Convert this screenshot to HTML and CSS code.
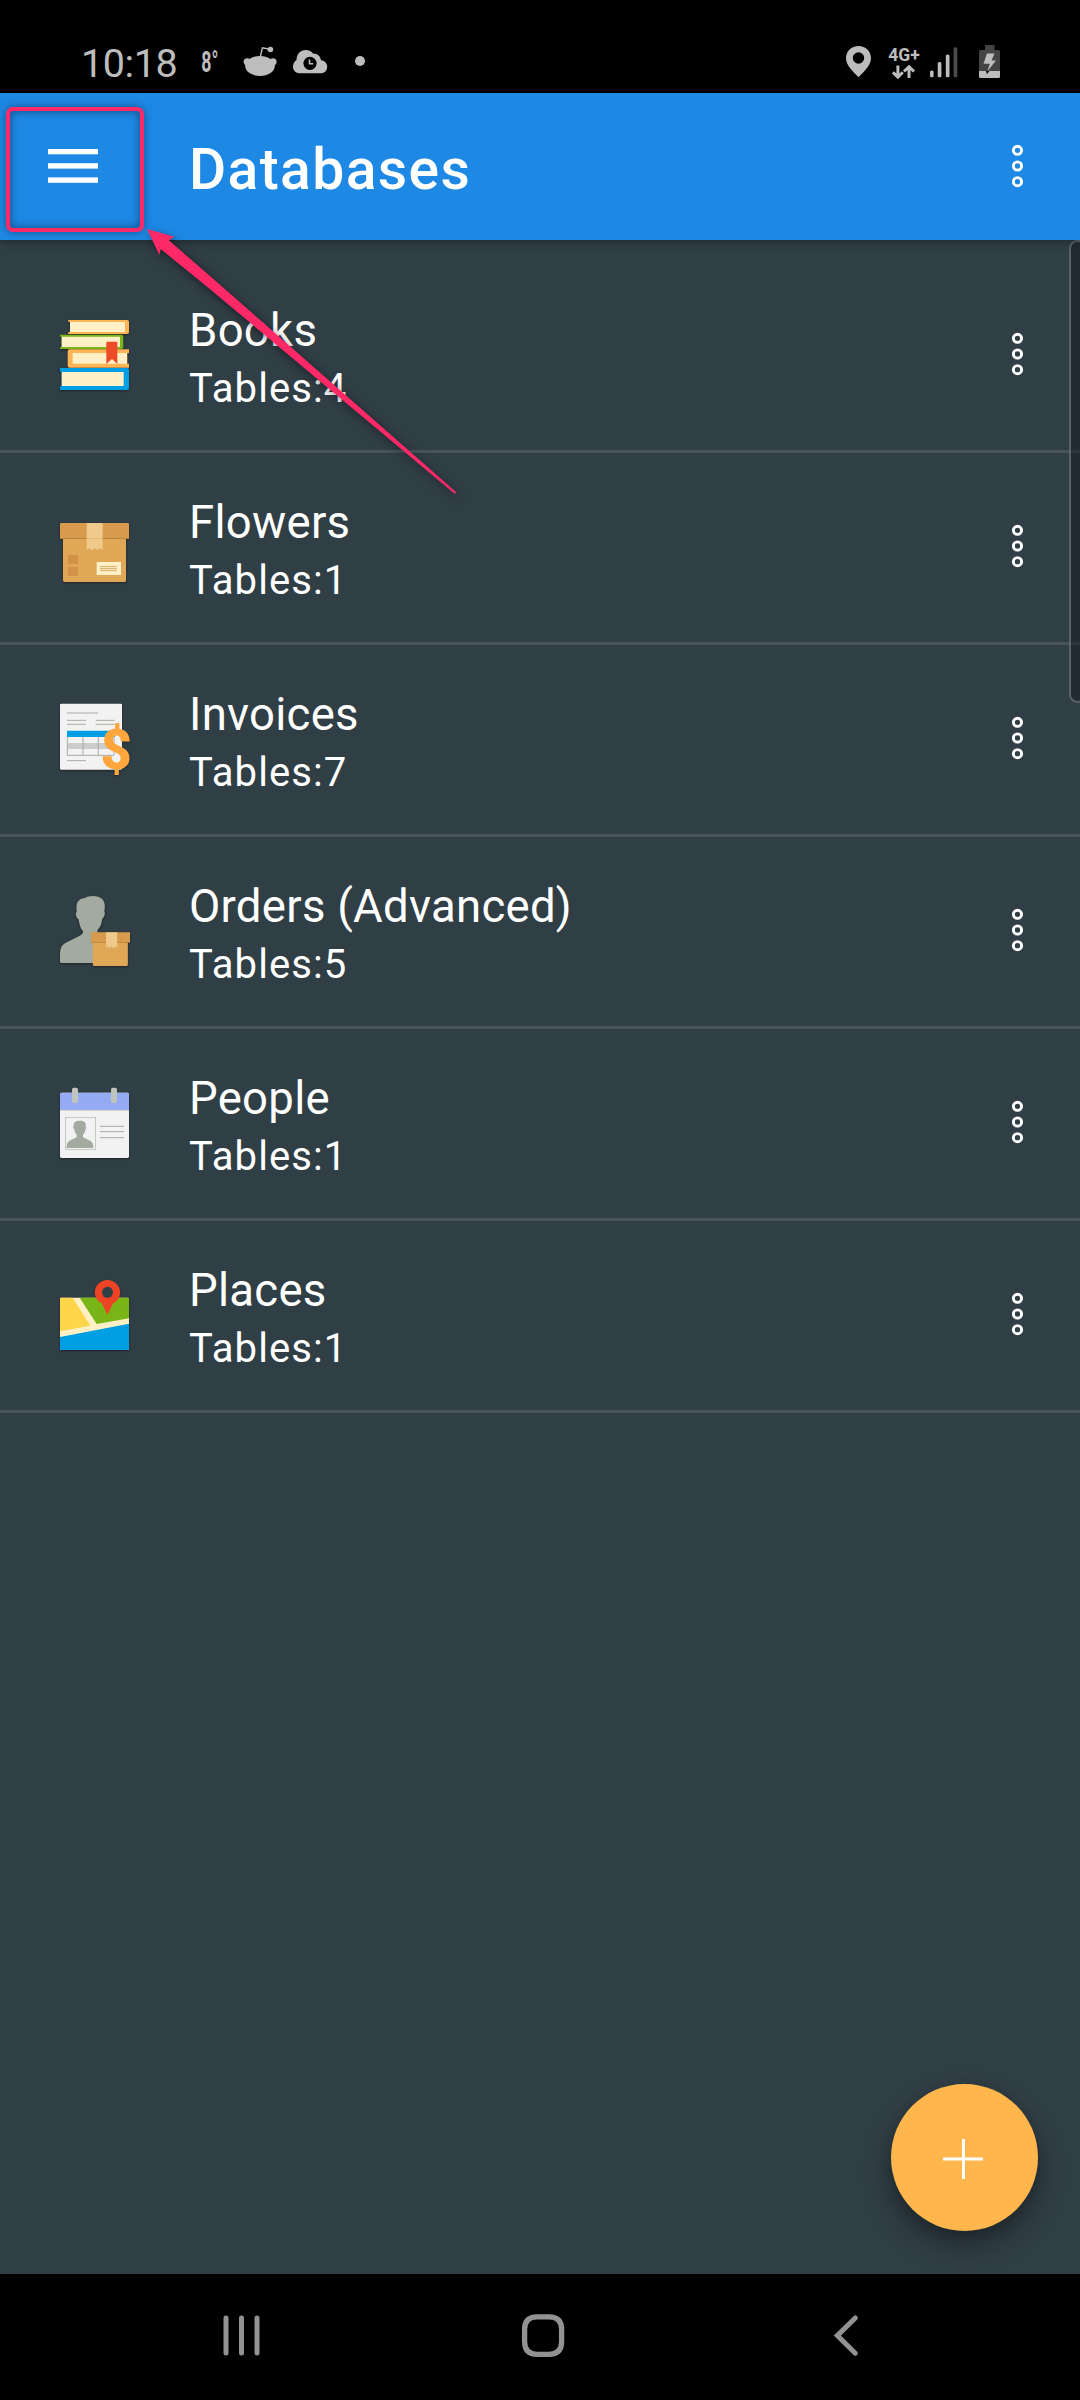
FILE: index.html
```html
<!DOCTYPE html>
<html lang="en">
<head>
<meta charset="utf-8">
<title>Databases</title>
<link rel="stylesheet" href="styles.css">
</head>
<body>
<svg class="defs" aria-hidden="true">
  <symbol id="more" viewBox="0 0 12 44">
    <g fill="none" stroke="#fff" stroke-width="2.9"><circle cx="5.500" cy="6.300" r="4.100"/><circle cx="5.500" cy="22" r="4.100"/><circle cx="5.500" cy="37.700" r="4.100"/></g>
  </symbol>
</svg>
<div class="screen">
  <div class="status">
    <div class="status-left">
      <span class="clock">10:18</span>
      <svg class="temp" width="22" height="32" viewBox="200 45 22 32" fill="#bdbdbd"><text class="temp-text" transform="translate(201.3 71.8) scale(.6 1)">8°</text></svg>
      <svg class="reddit" width="34" height="30" viewBox="243 46 34 30" fill="#bdbdbd"><ellipse cx="260" cy="66" rx="14.8" ry="10"/><circle cx="247.2" cy="61.8" r="3.6"/><circle cx="273" cy="61.8" r="3.6"/><circle cx="270.4" cy="49.5" r="2.8"/><path d="M260.3 57 L262.4 47.8 L270 49.3" fill="none" stroke="#bdbdbd" stroke-width="1.4"/></svg>
      <svg class="cloud" width="35" height="24" viewBox="293 50 35 24"><path d="M299.5 73.3c-4 0-6.5-3-6.5-6.5 0-3.200 1.500-5.300 3.500-6.700 0-6 4-10.100 9.200-10.100 3.300 0 5.800 1.500 7.300 3.500 5 0 7.500 3.200 8 6.800 4 .5 6.200 3.200 6.200 6.500 0 3.800-2.600 6.500-6.500 6.500z" fill="#bdbdbd"/><circle cx="310" cy="63.300" r="6.600" fill="#000"/><path d="M309.500 59.500v4.300h3.700" fill="none" stroke="#bdbdbd" stroke-width="1.600"/></svg>
      <span class="dot"></span>
    </div>
    <div class="status-right">
      <svg width="26" height="32" viewBox="846 46 26 32"><path fill="#bdbdbd" fill-rule="evenodd" d="M858.500 46c7.200 0 12.500 5.300 12.500 12.300 0 6.500-6 12.500-12.500 19-6.500-6.500-12.500-12.500-12.500-19 0-7 5.300-12.300 12.500-12.300zm0 6.300a5.700 5.700 0 1 0 0 11.400 5.700 5.700 0 0 0 0-11.400z"/></svg>
      <div class="network">
        <span class="network-type">4G+</span>
        <svg width="24" height="15" viewBox="892 65 24 15" fill="none" stroke="#bdbdbd" stroke-width="3"><path d="M897.900 65.500V77M893 72.300l4.900 4.800 4.900-4.800M909 78V66.500M904 71.500l5-4.800 5 4.800"/></svg>
      </div>
      <svg class="signal" width="28" height="31" viewBox="930 47 28 31" fill="#bdbdbd"><rect x="930" y="70.500" width="3.600" height="6.700" rx="1.500"/><rect x="937.700" y="62" width="3.700" height="15.200" rx="1.500"/><rect x="945.800" y="54.500" width="3.700" height="22.700" rx="1.500"/><rect x="953.600" y="47.300" width="3.700" height="30" rx="1.500" fill="#4b4b4b"/></svg>
      <svg class="battery" width="22" height="34" viewBox="979 45 22 34"><path fill="#444" d="M985 45h9.500v5h-9.500zM980.500 50h18q1.500 0 1.500 1.500V71h-21V51.500q0-1.500 1.500-1.500z"/><path fill="#bdbdbd" d="M979 71h21v5.500q0 1.500-1.500 1.500h-18q-1.500 0-1.500-1.500z"/><path fill="#bdbdbd" d="M987 53.500h7.500l-3 7h4.500l-8.700 11 2.500-7.700h-6.300z"/><path fill="#000" d="M986 71h3.300l-2.300 3.200z"/></svg>
    </div>
  </div>

  <header class="appbar">
    <svg class="menu" width="50" height="36" viewBox="0 0 50 36" fill="#fff"><rect width="50" height="5.300"/><rect y="14.200" width="50" height="5.400"/><rect y="28.400" width="50" height="5.400"/></svg>
    <h1 class="title">Databases</h1>
    <svg class="more" width="12" height="44"><use href="#more"/></svg>
  </header>

  <main class="content">
    <ul class="list">
      <li class="row">
        <svg class="icon" viewBox="48 78 228 228">
          <path fill="#ffb455" d="M85 90h176q6 0 6 6v30q0 6-6 6H85v-6h5V96h-5z"/><path fill="#fff0c5" d="M90 96h165v30H90z"/>
          <path fill="#79b516" d="M60 134h184q6 0 6 6v31q0 6-6 6H60v-6h5v-31h-5z"/><path fill="#fff0c5" d="M65 140h175v31H65z"/>
          <path fill="#ffb455" d="M267 178H89q-6 0-6 6v43q0 6 6 6h178v-12h-5v-31h5z"/><path fill="#fff0c5" d="M98 189h163v32H98z"/>
          <path fill="#009fe3" d="M60 234h201q6 0 6 6v54q0 6-6 6H60v-11h5v-44h-5z"/><path fill="#fff0c5" d="M65 246h186v42H65z"/>
          <path fill="#ed4b27" d="M199 155h33v67l-16-15-17 15z"/>
        </svg>
        <div class="text"><div class="name">Books</div><div class="count">Tables:4</div></div>
        <svg class="more" width="12" height="44"><use href="#more"/></svg>
      </li>
      <li class="row">
        <svg class="icon" viewBox="48 24 228 228">
          <path fill="#e0a757" d="M69 114h189v127q0 5-5 5H74q-5 0-5-5z"/><path fill="#d89b4d" d="M64 69h199q4 0 4 4v43H60V73q0-4 4-4z"/><path fill="#b98340" d="M60 114h207v3H60z"/>
          <path fill="#f0ca8c" d="M140 69h48v82l-8-7-8 7-8-7-8 7-8-7-8 7z"/><path fill="#e4b66f" d="M140 114h48v3h-48z"/>
          <path fill="#d29349" d="M84 165h30v27H84zM84 201h30v27H84z"/><path fill="#fff0c5" d="M170 186h73v39h-73z"/><path stroke="#d8ab62" stroke-width="3" d="M180 200h51M180 206h51M180 212h51"/>
        </svg>
        <div class="text"><div class="name">Flowers</div><div class="count">Tables:1</div></div>
        <svg class="more" width="12" height="44"><use href="#more"/></svg>
      </li>
      <li class="row">
        <svg class="icon" viewBox="48 60 228 228">
          <rect x="60" y="71" width="186" height="198" rx="4" fill="#f2f2f2"/>
          <path fill="none" stroke="#a9aca2" stroke-width="3" d="M81 99h93M81 121h57M167 121h57M81 133h57M167 133h57M81 242h57"/>
          <path fill="#ccc" d="M84 189h138v18H84z"/><path fill="none" stroke="#a9aca2" stroke-width="3" d="M82 170v56h140v-56M129 170v56M175 170v56"/><path fill="#009fe3" d="M81 152h144v19H81z"/>
          <text class="dollar" x="228.500" y="268" textLength="94" lengthAdjust="spacingAndGlyphs" text-anchor="middle">$</text>
        </svg>
        <div class="text"><div class="name">Invoices</div><div class="count">Tables:7</div></div>
        <svg class="more" width="12" height="44"><use href="#more"/></svg>
      </li>
      <li class="row">
        <svg class="icon" viewBox="44.800 66 212.800 228" preserveAspectRatio="none">
          <path fill="#a3aaa0" d="M103 124C99 100 107 86 124 85c12-10 41-10 51 3 7 9 8 23 5 36 4 6-1 20-6 23-2 19-6 25-13 33v16l18 12v71H60q-4 0-4-5v-19c0-16 3-28 14-35l40-22c9-5 12-9 10-15-6-7-9-16-12-35-7-3-10-20-5-24z"/>
          <path fill="#e0a757" d="M148 216h98v68q0 4-4 4h-90q-4 0-4-4z"/><path fill="#d89b4d" d="M143 187h109v30H143z"/><path fill="#b98340" d="M143 216h109v2H143z"/><path fill="#f0ca8c" d="M185 187h31v49l-5-8-5 7-6-7-5 7-5-7-5 8z"/>
        </svg>
        <div class="text"><div class="name">Orders (Advanced)</div><div class="count">Tables:5</div></div>
        <svg class="more" width="12" height="44"><use href="#more"/></svg>
      </li>
      <li class="row">
        <svg class="icon" viewBox="48 72 228 228">
          <rect x="60" y="98" width="207" height="196" rx="5" fill="#f2f2f2"/><path fill="#94abf3" d="M65 98h197q5 0 5 5v48H60v-48q0-5 5-5z"/><path fill="#d2d6cf" d="M60 150h207v3H60z"/>
          <rect x="96" y="83" width="18" height="46" rx="5" fill="#bfc5bc"/><rect x="213" y="83" width="18" height="46" rx="5" fill="#bfc5bc"/>
          <rect x="76.500" y="172.500" width="90" height="96" fill="none" stroke="#c5cabf" stroke-width="3"/>
          <path fill="#a3aaa0" d="M80 264c0-14 3-20 13-24l17-8v-8c-4-4-6-8-7-16-5-4-4-8-2-10-1-10 5-15 13-15 16-3 26 4 23 17 3 4 1 8-1 9-1 7-3 11-7 15v8l17 8c10 4 14 10 14 24z"/>
          <path stroke="#a9aca2" stroke-width="3" d="M180 199h72M180 215h72M180 233h72"/>
        </svg>
        <div class="text"><div class="name">People</div><div class="count">Tables:1</div></div>
        <svg class="more" width="12" height="44"><use href="#more"/></svg>
      </li>
      <li class="row">
        <svg class="icon" viewBox="48 78 228 228">
          <rect x="60" y="143" width="207" height="157" rx="4" fill="#fff0c5"/>
          <path fill="#ffd54a" d="M64 143h34l53 84-91 17v-97q0-4 4-4z"/><path fill="#79b516" d="M119 143h144q4 0 4 4v58l-97 17z"/><path fill="#009fe3" d="M60 261l207-40v75q0 4-4 4H64q-4 0-4-4z"/>
          <path fill="#ee4426" d="M202.500 90c21 0 38 17 38 37 0 16-9 27-21 33l-17 34-17-34c-12-6-21-17-21-33 0-20 17-37 38-37z"/><circle cx="202.500" cy="127" r="16.500" fill="#303e45"/>
        </svg>
        <div class="text"><div class="name">Places</div><div class="count">Tables:1</div></div>
        <svg class="more" width="12" height="44"><use href="#more"/></svg>
      </li>
    </ul>
    <button class="fab" aria-label="Add"><svg width="40" height="40" viewBox="0 0 40 40"><path stroke="#fff" stroke-width="3" d="M0 20h40M20.500 0v40"/></svg></button>
    <div class="edge-panel"></div>
  </main>

  <nav class="navbar">
    <svg width="38" height="44" viewBox="223 2314 38 44" stroke="#929292" stroke-width="5" stroke-linecap="round"><path d="M226 2318v35M241.500 2318v35M257 2318v35"/></svg>
    <svg class="home" width="44" height="44" viewBox="521 2314 44 44"><path fill="none" stroke="#929292" stroke-width="5.300" d="M537 2316.800h12q12.600 0 12.600 12.500v12.500q0 12.500-12.600 12.500h-12q-12.400 0-12.400-12.500v-12.500q0-12.500 12.400-12.500z"/></svg>
    <svg width="28" height="44" viewBox="832 2314 28 44"><path fill="none" stroke="#929292" stroke-width="5" stroke-linecap="round" d="M855.300 2318l-18 17.600 18 17.600"/></svg>
  </nav>

  <div class="highlight"></div>
  <svg class="arrow" width="330" height="280" viewBox="140 220 330 280"><path fill="#ff2968" d="M147 229l27.300 7.700-5.500 3.500L226 290l230 202-1 2L211 290l-50.300-41-1.300 6z"/></svg>
</div>
</body>
</html>
```
FILE: styles.css
```css
* { box-sizing: border-box; }
body { margin: 0; background: #000; font-family: Roboto, "Liberation Sans", sans-serif; }
svg { display: block; flex: none; }
.defs { position: absolute; width: 0; height: 0; }
.screen { position: relative; width: 1080px; height: 2400px; display: flex; flex-direction: column; overflow: hidden; }

.status { height: 93px; flex: none; padding: 0 79px 0 81px; display: flex; justify-content: space-between; color: #bdbdbd; }
.status-left, .status-right { display: flex; align-items: flex-start; }
.clock { width: 119px; font-size: 39.500px; line-height: 40px; padding-top: 44px; white-space: nowrap; letter-spacing: -.4px; }
.temp { margin-top: 45px; }
.temp-text { font: 700 29.500px Roboto, sans-serif; }
.reddit { margin: 46px 0 0 21px; }
.cloud { margin: 50px 0 0 16px; }
.dot { width: 10px; height: 10px; margin: 56px 0 0 27px; border-radius: 50%; background: #bdbdbd; }
.status-right { padding-top: 46px; }
.network { width: 32px; margin-left: 16px; display: flex; flex-direction: column; align-items: center; }
.network-type { font-size: 17.500px; line-height: 19px; font-weight: 700; }
.signal { margin: 1px 0 0 10px; }
.battery { margin: -1px 0 0 21px; }

.appbar { height: 147px; flex: none; padding: 0 56px 0 48px; display: flex; align-items: flex-start; background: #1e88e5; box-shadow: 0 2px 8px rgba(0,0,0,.35); z-index: 1; }
.menu { margin-top: 56px; }
.title { flex: 1; margin: 44px 0 0 91px; font-size: 57px; line-height: 66px; font-weight: 500; letter-spacing: 1.400px; color: #fff; white-space: nowrap; }
.appbar .more { margin-top: 51px; }

.content { position: relative; height: 2034px; flex: none; padding-top: 21px; background: #303e45; overflow: hidden; }
.list { margin: 0; padding: 0; list-style: none; }
.row { height: 192px; display: flex; align-items: flex-start; padding: 0 56px; border-bottom: 3px solid #47545a; color: #fff; }
.icon { width: 76px; height: 76px; margin-top: 55px; filter: drop-shadow(0 1px 1px rgba(0,0,0,.4)); }
.text { flex: 1; margin-left: 57px; padding-top: 44px; white-space: nowrap; }
.name { font-size: 45.500px; line-height: 52px; letter-spacing: .280px; }
.count { font-size: 40px; line-height: 46px; margin-top: 9px; letter-spacing: 1.100px; }
.row .more { margin-top: 71px; }
.dollar { font: 900 164px Roboto, sans-serif; fill: #ffa63d; }

.fab { position: absolute; right: 42px; bottom: 43px; width: 147px; height: 147px; padding: 0; border: 0; border-radius: 50%; background: #ffb74d; display: flex; align-items: center; justify-content: center; box-shadow: 0 14px 28px rgba(0,0,0,.3), 0 5px 12px rgba(0,0,0,.15); }
.fab svg { position: relative; left: -2px; top: 1px; }
.edge-panel { position: absolute; right: -6px; top: 0; width: 17px; height: 463px; border: 2px solid rgba(140,150,155,.5); border-radius: 9px; background: rgba(23,25,34,.55); }

.navbar { height: 126px; flex: none; padding: 40px 220px 0 223px; display: flex; background: #000; }
.home { margin: 0 267px 0 260px; }

.highlight { position: absolute; left: 6px; top: 107px; width: 138px; height: 125px; border: 4px solid #ff2968; border-radius: 7px; z-index: 2; box-shadow: 0 0 8px rgba(0,0,0,.4), inset 0 0 10px rgba(0,0,0,.45); }
.arrow { position: absolute; left: 140px; top: 220px; z-index: 2; filter: drop-shadow(2px 3px 4px rgba(0,0,0,.5)); }
```
